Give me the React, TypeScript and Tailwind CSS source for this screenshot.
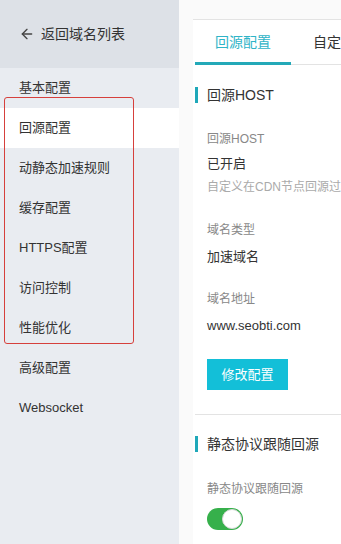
import { ArrowLeft } from 'lucide-react'

const menu = [
  '基本配置',
  '回源配置',
  '动静态加速规则',
  '缓存配置',
  'HTTPS配置',
  '访问控制',
  '性能优化',
  '高级配置',
  'Websocket',
]

function SectionTitle({ children }: { children: string }) {
  return (
    <div className="flex items-center h-[20px]">
      <div className="w-[3px] h-[16px] bg-[#1fa8b9]" />
      <span className="ml-[9px] text-[14px] text-[#333]">{children}</span>
    </div>
  )
}

export default function App() {
  return (
    <div
      className="relative w-[341px] h-[544px] overflow-hidden flex bg-[#fafafa]"
      style={{ fontFamily: '"Liberation Sans", "Noto Sans CJK SC", sans-serif' }}
    >
      {/* sidebar */}
      <aside className="w-[179px] shrink-0 bg-[#e9ecf1] flex flex-col">
        <div className="h-[68px] bg-[#dde1e7] flex items-center pl-[19px] gap-[6px] text-[14px] text-[#333]">
          <ArrowLeft size={16} strokeWidth={2} className="text-[#444]" />
          <span>返回域名列表</span>
        </div>
        {menu.map((m) => (
          <div
            key={m}
            className={`h-[40px] flex items-center pl-[19px] text-[13px] text-[#333] ${
              m === '回源配置' ? 'bg-white' : ''
            }`}
          >
            {m}
          </div>
        ))}
      </aside>

      {/* main */}
      <main className="flex-1 pt-[19px] pl-[14px] min-w-0">
        <div className="bg-white border-t border-[#e3e3e3] w-[400px] h-full pl-[2px] whitespace-nowrap">
          <div className="flex h-[45px] border-b border-[#e3e3e3]">
            <div className="relative px-[20px] flex items-center text-[14px] text-[#2fb4c7]">
              回源配置
              <div className="absolute left-0 right-0 -bottom-px h-[3px] bg-[#23a9b8]" />
            </div>
            <div className="px-[22px] flex items-center text-[14px] text-[#333]">自定义页面</div>
          </div>

          <div className="mt-[20px]">
            <SectionTitle>回源HOST</SectionTitle>
          </div>
          <div className="pl-[12px]">
            <div className="mt-[24px] h-[20px] leading-[20px] text-[12px] text-[#888]">回源HOST</div>
            <div className="mt-[5px] h-[20px] leading-[20px] text-[13px] text-[#333]">已开启</div>
            <div className="mt-[3px] h-[20px] leading-[20px] text-[12px] text-[#aaa]">
              自定义在CDN节点回源过程中所需访问的WEB服务器域名
            </div>
            <div className="mt-[23px] h-[20px] leading-[20px] text-[12px] text-[#888]">域名类型</div>
            <div className="mt-[7px] h-[20px] leading-[20px] text-[13px] text-[#333]">加速域名</div>
            <div className="mt-[22px] h-[20px] leading-[20px] text-[12px] text-[#888]">域名地址</div>
            <div className="mt-[7px] h-[20px] leading-[20px] text-[13px] text-[#333]">www.seobti.com</div>
            <button className="mt-[23px] w-[81px] h-[31px] bg-[#13bfd8] text-white text-[13px]">
              修改配置
            </button>
          </div>
          <div className="mt-[24px] border-t border-[#e3e3e3]" />
          <div className="mt-[19px]">
            <SectionTitle>静态协议跟随回源</SectionTitle>
          </div>
          <div className="pl-[12px]">
            <div className="mt-[25px] h-[20px] leading-[20px] text-[12px] text-[#888]">静态协议跟随回源</div>
            <div className="mt-[9px] w-[36px] h-[22px] rounded-full bg-[#36b04b] flex items-center justify-end pr-[1px]">
              <div className="w-[20px] h-[20px] rounded-full bg-white border border-[#d8d8d8]" />
            </div>
          </div>
        </div>
      </main>

      {/* annotation */}
      <div className="absolute left-[4px] top-[97px] w-[130px] h-[247px] border border-[#d6403c] rounded-[3px]" />
    </div>
  )
}
